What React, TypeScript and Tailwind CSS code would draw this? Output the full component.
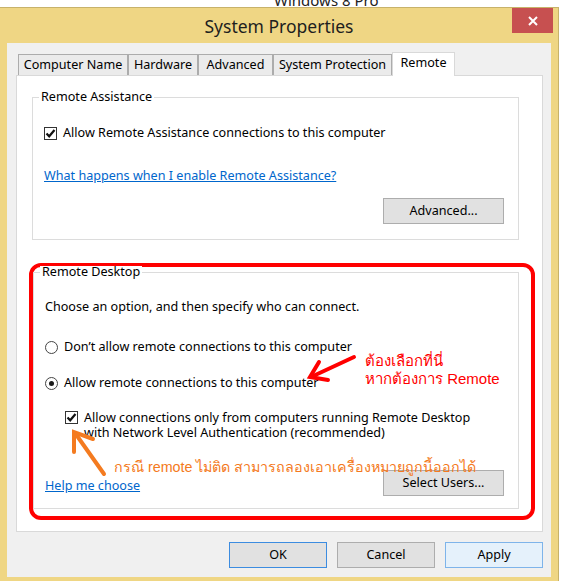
import React from "react";

function CheckBox() {
  return (
    <span className="flex h-[13px] w-[13px] shrink-0 items-center justify-center border border-[#333333] bg-white">
      <svg width="11" height="11" viewBox="0 0 11 11">
        <path d="M1.5 5.5 L4.2 8.3 L9.5 2" fill="none" stroke="#111" strokeWidth="2.2" />
      </svg>
    </span>
  );
}

function Radio({ checked }: { checked?: boolean }) {
  return (
    <span className="flex h-[13px] w-[13px] shrink-0 items-center justify-center rounded-full border border-[#444444] bg-white">
      {checked && <span className="h-[5px] w-[5px] rounded-full bg-[#1a1a1a]" />}
    </span>
  );
}

function Button({ label, variant = "normal" }: { label: string; variant?: "normal" | "default" | "hover" }) {
  const tone =
    variant === "default"
      ? "border-[#3c8ce0] bg-[#e1e1e1]"
      : variant === "hover"
        ? "border-[#7eb4ea] bg-[#e5f1fb]"
        : "border-[#adadad] bg-[#e1e1e1]";
  return (
    <div className={`flex h-[26px] items-center justify-center border text-black ${tone}`}>
      {label}
    </div>
  );
}

function GroupLabel({ children }: { children: React.ReactNode }) {
  return <div className="-ml-[5px] -mt-[7px] w-fit bg-white px-[2px] leading-[12px]">{children}</div>;
}

const tabs = [
  { label: "Computer Name", w: "w-[110px]" },
  { label: "Hardware", w: "w-[70px]" },
  { label: "Advanced", w: "w-[75px]" },
  { label: "System Protection", w: "w-[119px]" },
];

export default function App() {
  return (
    <div className="relative h-[581px] w-[561px] overflow-hidden bg-white font-['Noto_Sans',sans-serif] text-[12.6px] leading-[16px] text-black">
      {/* desktop caption behind the dialog, cut off at the top */}
      <div className="h-[7px] overflow-hidden pl-[274px]">
        <div className="-mt-[9px] text-[15px] leading-[18px] text-[#222]">Windows 8 Pro</div>
      </div>

      <div className="w-[559px] border-r border-t border-[#c7b26a] bg-[#efd684] pb-[6px]">
        {/* title bar */}
        <div className="grid h-[35px] grid-cols-[1fr_auto_1fr]">
          <div />
          <div className="self-center pt-[1px] text-[17.5px] leading-[22px] text-[#1e1e1e]">System Properties</div>
          <div className="flex justify-end pr-[5px]">
            <div className="flex h-[25px] w-[41px] items-center justify-center bg-[#c75050]">
              <svg width="10" height="10" viewBox="0 0 10 10">
                <path d="M1 1 L9 9 M9 1 L1 9" stroke="#fff" strokeWidth="2" />
              </svg>
            </div>
          </div>
        </div>

        {/* client area */}
        <div className="ml-[7px] mr-[7px] bg-[#f0f0f0] pb-[9px] pl-[9px] pr-[8px] pt-[9px]">
          <div className="relative z-10 flex h-[23px] items-end pl-[2px]">
            {tabs.map((t) => (
              <div
                key={t.label}
                className={`flex h-[21px] items-center justify-center border border-b-0 border-[#acacac] bg-[#ebebeb] ${t.w}`}
              >
                {t.label}
              </div>
            ))}
            <div className="-mb-px flex h-[24px] w-[63px] items-start justify-center border border-b-0 border-[#d9d9d9] bg-white pt-[2px]">
              Remote
            </div>
          </div>

          <div className="border border-[#d9d9d9] bg-white pb-[11px] pl-[15px] pr-[23px] pt-[21px]">
            <div className="border border-[#dcdcdc] pb-[15px] pl-[11px] pr-[14px]">
              <GroupLabel>Remote Assistance</GroupLabel>
              <div className="mt-[22px] flex items-center gap-[6px]">
                <CheckBox />
                <span>Allow Remote Assistance connections to this computer</span>
              </div>
              <div className="mt-[27px] text-[#0066cc] underline">What happens when I enable Remote Assistance?</div>
              <div className="mt-[14px] flex justify-end">
                <div className="w-[121px]">
                  <Button label="Advanced..." />
                </div>
              </div>
            </div>

            <div className="-ml-[3px] -mr-[16px] mt-[23px] rounded-[12px] border-4 border-[#ff0000] pb-[7px] pr-[12px] pt-[5px]">
              <div className="border border-[#dcdcdc] pb-[12px] pl-[11px] pr-[14px]">
                <GroupLabel>Remote Desktop</GroupLabel>
                <div className="mt-[21px]">Choose an option, and then specify who can connect.</div>
                <div className="mt-[24px] flex items-center gap-[6px]">
                  <Radio />
                  <span>Don’t allow remote connections to this computer</span>
                </div>
                <div className="mt-[20px] flex items-center gap-[6px]">
                  <Radio checked />
                  <span>Allow remote connections to this computer</span>
                </div>
                <div className="ml-[20px] mt-[19px] flex items-start gap-[6px] leading-[15px]">
                  <div className="pt-[1px]">
                    <CheckBox />
                  </div>
                  <div>
                    Allow connections only from computers running Remote Desktop
                    <br />
                    with Network Level Authentication (recommended)
                  </div>
                </div>
                <div className="mt-[30px] flex items-start justify-between">
                  <span className="mt-[8px] text-[#0066cc] underline">Help me choose</span>
                  <div className="w-[121px]">
                    <Button label="Select Users..." />
                  </div>
                </div>
              </div>
            </div>
          </div>

          <div className="mt-[10px] flex justify-end gap-[10px]">
            <div className="w-[98px]">
              <Button label="OK" variant="default" />
            </div>
            <div className="w-[98px]">
              <Button label="Cancel" />
            </div>
            <div className="w-[98px]">
              <Button label="Apply" variant="hover" />
            </div>
          </div>
        </div>
      </div>

      {/* annotations */}
      <svg className="pointer-events-none absolute left-0 top-0" width="561" height="581">
        <g stroke="#ff0000" strokeWidth="4" strokeLinecap="round" fill="none">
          <path d="M354 357 L311 377" />
          <path d="M319 362 L310 377 L328 380" />
        </g>
        <g stroke="#f47b20" strokeWidth="4" strokeLinecap="round" fill="none">
          <path d="M104 474 L75 433" />
          <path d="M74 452 L74 432 L93 439" />
        </g>
      </svg>
      <div className="pointer-events-none absolute left-[365px] top-[352px] font-['Liberation_Sans','DejaVu_Sans',sans-serif] text-[15px] leading-[18px] text-[#ff0000]">
        ต้องเลือกที่นี่
        <br />
        หากต้องการ Remote
      </div>
      <div className="pointer-events-none absolute left-[114px] top-[458px] font-['Liberation_Sans','DejaVu_Sans',sans-serif] text-[14.3px] leading-[18px] text-[#f47920]">
        กรณี remote ไม่ติด สามารถลองเอาเครื่องหมายถูกนี้ออกได้
      </div>
    </div>
  );
}
